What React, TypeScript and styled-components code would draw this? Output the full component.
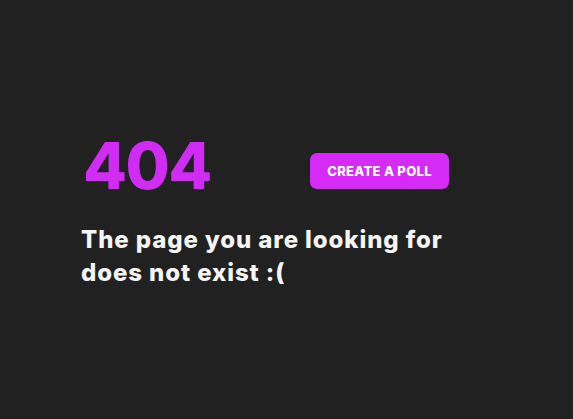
import React from "react";
import styled, { createGlobalStyle } from "styled-components";

const GlobalStyle = createGlobalStyle`
  html, body {
    margin: 0;
    padding: 0;
    background: #212121;
  }
  body {
    font-family: Inter, "Open Sans", sans-serif;
  }
`;

const Page = styled.main`
  box-sizing: border-box;
  height: 419px;
  width: 573px;
  display: flex;
  flex-direction: column;
  justify-content: flex-start;
  padding: 134px 0 0 81px;
`;

const TopRow = styled.div`
  display: grid;
  grid-template-columns: 229px auto;
  align-items: start;
  justify-content: start;
`;

const Code = styled.h1`
  margin: 0;
  padding-left: 2px;
  font-family: Inter, sans-serif;
  font-weight: 800;
  font-size: 64px;
  line-height: 1;
  letter-spacing: -1.5px;
  color: #d02cf3;
`;

const PollButton = styled.button`
  box-sizing: border-box;
  width: 139px;
  height: 36px;
  margin-top: 19px;
  border: none;
  border-radius: 7px;
  background: #d62af7;
  color: #ffffff;
  font-family: Inter, sans-serif;
  font-weight: 800;
  font-size: 13px;
  letter-spacing: 0.3px;
  cursor: pointer;
`;

const Message = styled.p`
  margin: 25px 0 0;
  max-width: 370px;
  font-family: Inter, sans-serif;
  font-weight: 800;
  font-size: 24px;
  line-height: 33px;
  letter-spacing: 0.9px;
  color: #f5f5f5;
`;

export default function App() {
  return (
    <>
      <GlobalStyle />
      <Page>
        <TopRow>
          <Code>404</Code>
          <PollButton>CREATE A POLL</PollButton>
        </TopRow>
        <Message>The page you are looking for does not exist :(</Message>
      </Page>
    </>
  );
}
